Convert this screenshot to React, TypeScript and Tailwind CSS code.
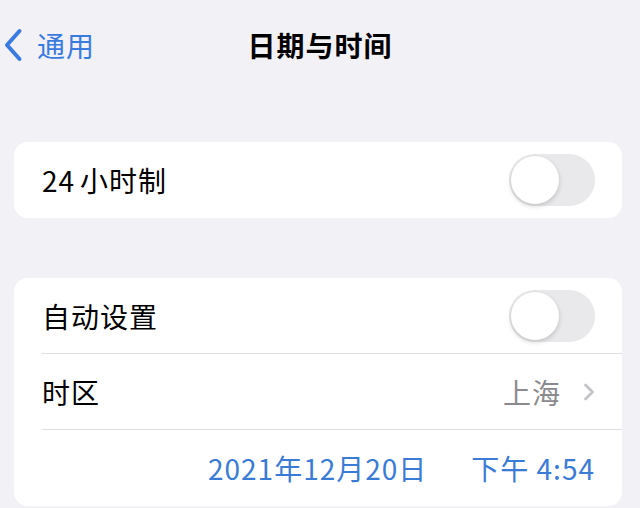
import { ChevronRight } from "lucide-react";

const font = { fontFamily: '"Noto Sans CJK SC", "Noto Sans", sans-serif' };

function Toggle() {
  return (
    <div className="relative h-[52px] w-[86px] shrink-0 rounded-full bg-[#e9e9eb]">
      <div className="absolute left-[2px] top-[2px] h-[48px] w-[48px] rounded-full bg-white shadow-[0_2px_5px_rgba(0,0,0,0.18)]" />
    </div>
  );
}

export default function App() {
  return (
    <div className="h-[508px] w-[640px] overflow-hidden bg-[#f2f1f6] text-[28px] tracking-[1px] text-black" style={font}>
      {/* nav bar */}
      <div className="relative flex h-[90px] items-center justify-center">
        <div className="absolute left-[3px] top-[27px] flex items-center gap-[14px] text-[#3a7be0]">
          <svg width="20" height="34" viewBox="0 0 20 34" fill="none">
            <path d="M16.5 3 L4 17 L16.5 31" stroke="#3a7be0" strokeWidth="4" strokeLinecap="round" strokeLinejoin="round" />
          </svg>
          <span className="leading-[36px]">通用</span>
        </div>
        <span className="font-bold leading-[36px]">日期与时间</span>
      </div>

      <div className="flex flex-col gap-[60px] pl-[14px] pr-[18px] pt-[52px]">
        <div className="flex h-[76px] items-center justify-between rounded-[14px] bg-white pl-[28px] pr-[27px]">
          <span>
            <span className="mr-[5px]">24</span>小时制
          </span>
          <Toggle />
        </div>

        <div className="rounded-[14px] bg-white pl-[28px]">
          <div className="flex h-[76px] items-center justify-between border-b border-[#dedee2] pr-[27px]">
            <span>自动设置</span>
            <Toggle />
          </div>
          <div className="flex h-[76px] items-center justify-between border-b border-[#dedee2] pr-[27px]">
            <span>时区</span>
            <div className="flex items-center gap-[14px] text-[#8a8a8e]">
              <span>上海</span>
              <ChevronRight size={28} strokeWidth={2.4} className="-mr-[8px] text-[#c4c4c8]" />
            </div>
          </div>
          <div className="flex h-[76px] items-center justify-end gap-[44px] pr-[27px] text-[#3a7bd5]">
            <span>2021年12月20日</span>
            <span>下午 4:54</span>
          </div>
        </div>
      </div>
    </div>
  );
}
